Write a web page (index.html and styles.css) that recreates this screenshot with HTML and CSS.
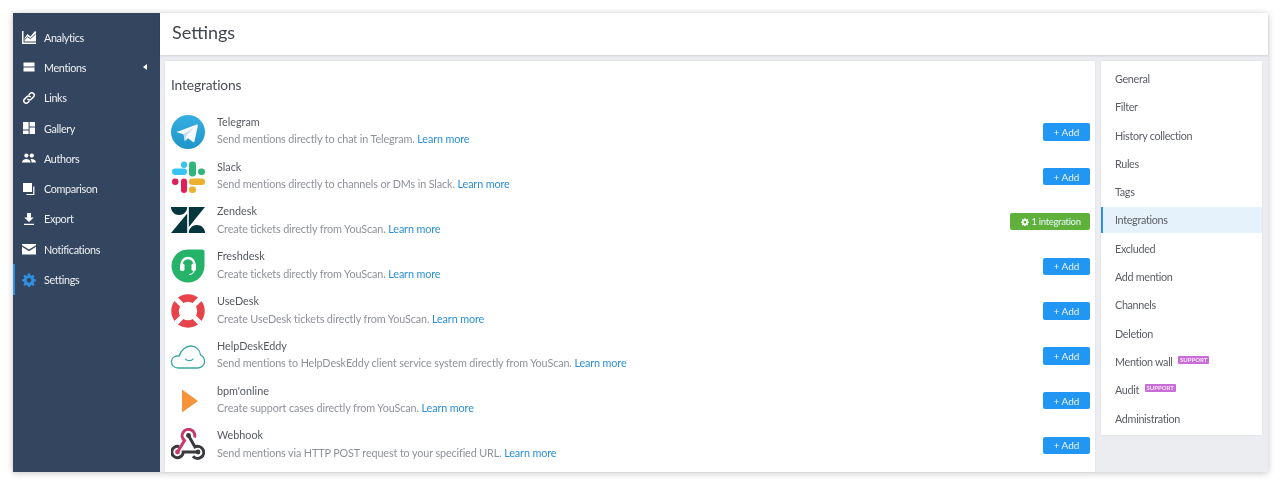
FILE: index.html
```html
<!DOCTYPE html>
<html lang="en">
<head>
<meta charset="utf-8">
<title>Settings</title>
<link rel="stylesheet" href="styles.css">
</head>
<body>
<div class="window">
  <aside class="sidebar">
    <a class="side-item"><svg class="side-icon" viewBox="0 0 14 14"><path fill="#fff" d="M0 1h1.500v11.500H14V14H0z"/><path fill="#fff" d="M2.500 11.500V8l3-4 3 2.500L13 1l1 .8v9.700z"/><path fill="none" stroke="#34465f" stroke-width=".9" d="M2.500 9.600l3-2.800 3 1.800L13.600 4"/></svg><span>Analytics</span></a>
    <a class="side-item"><svg class="side-icon" viewBox="0 0 14 14"><path fill="#fff" d="M1.500 2.500h11V6.400h-11zM1.500 7.400h11v4.100h-11z"/></svg><span>Mentions</span><i class="caret"></i></a>
    <a class="side-item"><svg class="side-icon" viewBox="0 0 14 14"><g fill="none" stroke="#fff" stroke-width="1.500" stroke-linecap="round"><path d="M5.800 8.200a2.400 2.400 0 0 0 3.400 0l2.300-2.300a2.400 2.400 0 0 0-3.400-3.400l-1 1"/><path d="M8.200 5.800a2.400 2.400 0 0 0-3.400 0L2.500 8.100a2.400 2.400 0 0 0 3.400 3.400l1-1"/></g></svg><span>Links</span></a>
    <a class="side-item"><svg class="side-icon" viewBox="0 0 14 14"><path fill="#fff" d="M1 1h5.600v7.500H1zM7.600 1H13v4.600H7.600zM7.600 6.600H13V13H7.600zM1 9.500h5.600V13H1z"/></svg><span>Gallery</span></a>
    <a class="side-item"><svg class="side-icon" viewBox="0 0 14 14"><g fill="#fff"><circle cx="4.400" cy="4.600" r="2.100"/><circle cx="9.800" cy="4.600" r="2.100"/><path d="M0 11.500c0-2.400 2-3.600 4.400-3.600s4.200 1.200 4.200 3.600zM9.600 11.500c0-1.500-.5-2.700-1.400-3.400 2.700-.6 5.800.5 5.800 3.400z"/></g></svg><span>Authors</span></a>
    <a class="side-item"><svg class="side-icon" viewBox="0 0 14 14"><path fill="#fff" d="M1 1h9v9H1z"/><path fill="none" stroke="#fff" stroke-width="1.200" d="M11.800 4.500v8H4.500"/></svg><span>Comparison</span></a>
    <a class="side-item"><svg class="side-icon" viewBox="0 0 14 14"><path fill="#fff" d="M5 1h4v4.500h2.800L7 10 2.200 5.500H5zM2 11.700h10V13H2z"/></svg><span>Export</span></a>
    <a class="side-item"><svg class="side-icon" viewBox="0 0 14 14"><path fill="#fff" d="M0 2h14v1.200L7 7.600 0 3.200zM0 4.800l7 4.400 7-4.400V12.500H0z"/></svg><span>Notifications</span></a>
    <a class="side-item is-active"><svg class="side-icon" viewBox="0 0 14 14"><path fill="#2f8fe0" fill-rule="evenodd" d="M6 .5h2l.4 1.800 1.200.5L11.200 1.800l1.400 1.400-1 1.600.5 1.200 1.800.4v2l-1.800.4-.5 1.200 1 1.600-1.400 1.400-1.600-1-1.200.5-.4 1.800H6l-.4-1.800-1.200-.5-1.600 1-1.400-1.400 1-1.600-.5-1.200L.1 8.400v-2l1.800-.4.5-1.200-1-1.600 1.400-1.400 1.600 1 1.200-.5zM7 5a2.300 2.300 0 1 0 0 4.700A2.300 2.300 0 0 0 7 5z"/></svg><span>Settings</span></a>
  </aside>
  <div class="content">
    <header class="topbar"><h1>Settings</h1></header>
    <div class="panels">
      <main class="card integrations">
        <h2>Integrations</h2>
        <div class="row">
          <svg class="logo" viewBox="0 0 34 34"><defs><linearGradient id="tg" x1="0" y1="0" x2="0" y2="1"><stop offset="0" stop-color="#37aee2"/><stop offset="1" stop-color="#1e96c8"/></linearGradient></defs><circle cx="17" cy="17" r="17" fill="url(#tg)"/><path fill="#f4f9fc" d="M6.500 16.800l19-7.300c.9-.3 1.600.2 1.300 1.400l-3.200 15.200c-.2 1-.9 1.300-1.700.8l-4.900-3.600-2.400 2.300c-.5.500-1 .3-1.100-.4l-.9-5.900-6-1.800c-1-.3-1-1 0-1.400z"/><path fill="#c8dbe8" d="M12.600 19.300l10-6.300-7.600 8 .3 4.500-1.200-.3z"/></svg>
          <div class="info"><div class="name">Telegram</div><div class="desc">Send mentions directly to chat in Telegram. <a>Learn more</a></div></div>
          <button class="btn">+ Add</button>
        </div>
        <div class="row">
          <svg class="logo" viewBox="0 0 34 34"><g fill="#36c5f0"><rect x="1" y="8.500" width="15" height="6.500" rx="3.200"/><rect x="10" y="1.500" width="6" height="6.500" rx="3"/></g><g fill="#2eb67d"><rect x="18" y="1.500" width="7" height="15" rx="3.200"/><rect x="27" y="8.500" width="7" height="6.500" rx="3.200"/></g><g fill="#ecb22e"><rect x="18" y="18.500" width="16" height="6.500" rx="3.200"/><rect x="18" y="26.500" width="7" height="6.500" rx="3.200"/></g><g fill="#e01e5a"><rect x="10" y="18.500" width="6" height="14.500" rx="3"/><rect x="1" y="18.500" width="6.500" height="6.500" rx="3.200"/></g></svg>
          <div class="info"><div class="name">Slack</div><div class="desc">Send mentions directly to channels or DMs in Slack. <a>Learn more</a></div></div>
          <button class="btn">+ Add</button>
        </div>
        <div class="row">
          <svg class="logo" viewBox="0 0 34 34"><g fill="#03363d"><path d="M0 3h16.200c0 4.500-3.600 8-8.100 8S0 7.500 0 3z"/><path d="M16.200 9.500V29H0z"/><path d="M17.800 3H34L17.800 23z"/><path d="M17.800 29c0-4.500 3.600-8 8.100-8S34 24.500 34 29z"/></g></svg>
          <div class="info"><div class="name">Zendesk</div><div class="desc">Create tickets directly from YouScan. <a>Learn more</a></div></div>
          <button class="btn btn-green"><svg class="gear" viewBox="0 0 14 14"><path fill="#fff" fill-rule="evenodd" d="M6 .5h2l.4 1.800 1.200.5L11.200 1.800l1.400 1.400-1 1.600.5 1.200 1.800.4v2l-1.800.4-.5 1.200 1 1.600-1.400 1.400-1.600-1-1.200.5-.4 1.800H6l-.4-1.800-1.200-.5-1.600 1-1.400-1.400 1-1.600-.5-1.200L.1 8.400v-2l1.800-.4.5-1.200-1-1.600 1.400-1.400 1.600 1 1.200-.5zM7 5a2.300 2.300 0 1 0 0 4.700A2.300 2.300 0 0 0 7 5z"/></svg> 1 integration</button>
        </div>
        <div class="row">
          <svg class="logo" viewBox="0 0 34 34"><path fill="#25b36a" d="M17 .5h14.500c1 0 2 1 2 2V17c0 9-7.500 16.500-16.500 16.500S.5 26 .5 17 8 .5 17 .5z"/><path fill="none" stroke="#fff" stroke-width="2.400" d="M10.500 19v-3.500a6.500 6.500 0 0 1 13 0V19"/><path fill="none" stroke="#fff" stroke-width="1.200" d="M23 21c0 3-2.500 4.500-5 4.500"/><rect x="9" y="14.500" width="4.500" height="7.500" rx="1.800" fill="#fff"/><rect x="20.500" y="14.500" width="4.500" height="7.500" rx="1.800" fill="#fff"/></svg>
          <div class="info"><div class="name">Freshdesk</div><div class="desc">Create tickets directly from YouScan. <a>Learn more</a></div></div>
          <button class="btn">+ Add</button>
        </div>
        <div class="row">
          <svg class="logo" viewBox="0 0 34 34"><circle cx="17" cy="17" r="13" fill="none" stroke="#e8424b" stroke-width="7.500"/><path stroke="#fff" stroke-width="5" d="M3 3l9 9M31 3l-9 9M3 31l9-9M31 31l-9-9"/></svg>
          <div class="info"><div class="name">UseDesk</div><div class="desc">Create UseDesk tickets directly from YouScan. <a>Learn more</a></div></div>
          <button class="btn">+ Add</button>
        </div>
        <div class="row">
          <svg class="logo" viewBox="0 0 34 34"><path fill="none" stroke="#3aa6a0" stroke-width="1.300" d="M7 29c-4 0-6.500-3-6.500-6 0-3.500 2.500-6 6-6 .5 0 1 .1 1.500.2C10 11 15 7 20 7c5 0 9 4 9.500 9 2.500 1 4 3.500 4 6.500 0 3.500-3 6.500-6.500 6.500z"/><path fill="none" stroke="#3aa6a0" stroke-width="1.300" stroke-linecap="round" d="M14.500 20c1.500 2.200 6 2.200 7.500 0"/></svg>
          <div class="info"><div class="name">HelpDeskEddy</div><div class="desc">Send mentions to HelpDeskEddy client service system directly from YouScan. <a>Learn more</a></div></div>
          <button class="btn">+ Add</button>
        </div>
        <div class="row">
          <svg class="logo" viewBox="0 0 34 34"><path fill="#f7943a" d="M11 5.500L27 17 11 28.500z"/></svg>
          <div class="info"><div class="name">bpm'online</div><div class="desc">Create support cases directly from YouScan. <a>Learn more</a></div></div>
          <button class="btn">+ Add</button>
        </div>
        <div class="row">
          <svg class="logo" viewBox="0 0 34 34"><g fill="none" stroke-width="3"><path stroke="#c73a6e" d="M6.500 24L13.500 12.500A6.300 6.300 0 1 1 23.500 9.500"/><path stroke="#3a3a3e" d="M17.500 7.500L24 19A6 6 0 1 1 22 28.200"/><path stroke="#3a3a3e" d="M27 24H12.200A5.700 5.700 0 1 1 8 18.500"/></g><circle cx="17.500" cy="7.500" r="2.400" fill="#3a3a3e"/><circle cx="6.500" cy="24" r="2.400" fill="#c73a6e"/><circle cx="27" cy="24" r="2.400" fill="#3a3a3e"/></svg>
          <div class="info"><div class="name">Webhook</div><div class="desc">Send mentions via HTTP POST request to your specified URL. <a>Learn more</a></div></div>
          <button class="btn">+ Add</button>
        </div>
      </main>
      <div class="side-col">
        <nav class="card menu">
          <a class="menu-item">General</a>
          <a class="menu-item">Filter</a>
          <a class="menu-item">History collection</a>
          <a class="menu-item">Rules</a>
          <a class="menu-item">Tags</a>
          <a class="menu-item is-current">Integrations</a>
          <a class="menu-item">Excluded</a>
          <a class="menu-item">Add mention</a>
          <a class="menu-item">Channels</a>
          <a class="menu-item">Deletion</a>
          <a class="menu-item">Mention wall <sup class="tag">SUPPORT</sup></a>
          <a class="menu-item">Audit <sup class="tag">SUPPORT</sup></a>
          <a class="menu-item">Administration</a>
        </nav>
      </div>
    </div>
  </div>
</div>
</body>
</html>
```
FILE: styles.css
```css
* { box-sizing: border-box; }
html, body { margin: 0; height: 100%; background: #fff; overflow: hidden; }
body {
  padding: 13px 12px 14px 13px;
  font-family: Lato, "Liberation Sans", Arial, sans-serif;
  color: #4b4f56;
}
.window {
  display: flex;
  height: 459px;
  background: #ebedf0;
  box-shadow: 0 1px 7px rgba(0, 0, 0, .24);
  border-radius: 0 2px 0 0;
  filter: blur(.4px);
}
.sidebar {
  width: 147px;
  flex: none;
  background: #34465f;
  padding-top: 9px;
}
.side-item {
  display: flex;
  align-items: center;
  height: 30.3px;
  padding-left: 9px;
  color: #eef1f4;
  font-size: 10.8px;
  letter-spacing: -.35px;
  position: relative;
}
.side-item.is-active { box-shadow: inset 2px 0 0 #2f8fe0; }
.side-icon { width: 14px; height: 14px; margin-right: 8px; flex: none; }
.caret {
  position: absolute;
  left: 130px;
  top: 12px;
  border: 3px solid transparent;
  border-right: 4px solid #fff;
  border-left: 0;
}
.content { flex: 1; display: flex; flex-direction: column; min-width: 0; }
.topbar {
  height: 42px;
  background: #fff;
  padding: 0 0 5px 12px;
  display: flex;
  align-items: center;
  box-shadow: 0 1px 2px rgba(0, 0, 0, .12);
}
h1 { margin: 0; font-size: 18px; font-weight: 400; color: #42464c; }
.panels { flex: 1; display: flex; gap: 6px; padding: 6px 6px 0 5px; min-height: 0; }
.card { background: #fff; box-shadow: 0 0 2px rgba(0, 0, 0, .08); }
.integrations { flex: 1; padding: 15px 5px 0 6px; min-width: 0; }
h2 { margin: 0 0 16px; font-size: 13.8px; letter-spacing: -.15px; line-height: 17px; font-weight: 400; color: #4b4f56; }
.row { display: flex; align-items: center; height: 44.8px; }
.logo { width: 34px; height: 34px; flex: none; margin: 1px 12px 0 0; }
.info { flex: 1; min-width: 0; padding-bottom: 2.5px; }
.name { font-size: 10.8px; line-height: 15px; color: #55595f; }
.desc { font-size: 10.8px; letter-spacing: -.12px; line-height: 15px; margin-top: 2.5px; color: #8e9298; }
.desc a { color: #2a8fd8; }
.btn {
  height: 17.5px;
  margin-top: 1px;
  padding: 0;
  border: 0;
  border-radius: 2px;
  background: #2196f3;
  color: #e8f4fe;
  font: 10px Lato, "Liberation Sans", Arial, sans-serif;
  white-space: nowrap;
  width: 47px;
  flex: none;
}
.btn-green { background: #5fb13b; width: 80px; font-size: 9.5px; letter-spacing: -.3px; padding-left: 2px; }
.gear { width: 8px; height: 8px; vertical-align: -1px; }
.side-col { width: 161px; flex: none; }
.menu { height: 374px; padding-top: 5px; display: flex; flex-direction: column; gap: 2.3px; }
.menu-item {
  display: block;
  flex: none;
  height: 26px;
  line-height: 26px;
  padding-left: 14px;
  font-size: 10.8px;
  letter-spacing: -.33px;
  color: #5a5e64;
  white-space: nowrap;
}
.menu-item.is-current { background: #e6f2fb; box-shadow: inset 2px 0 0 #2f8fe0; }
.tag {
  display: inline-block;
  background: #c86dd7;
  color: #f5e6f8;
  font-size: 6px;
  letter-spacing: 0;
  line-height: 8px;
  font-weight: 700;
  padding: 0 2px;
  border-radius: 1px;
  vertical-align: 4px;
  margin-left: 3px;
}
```
